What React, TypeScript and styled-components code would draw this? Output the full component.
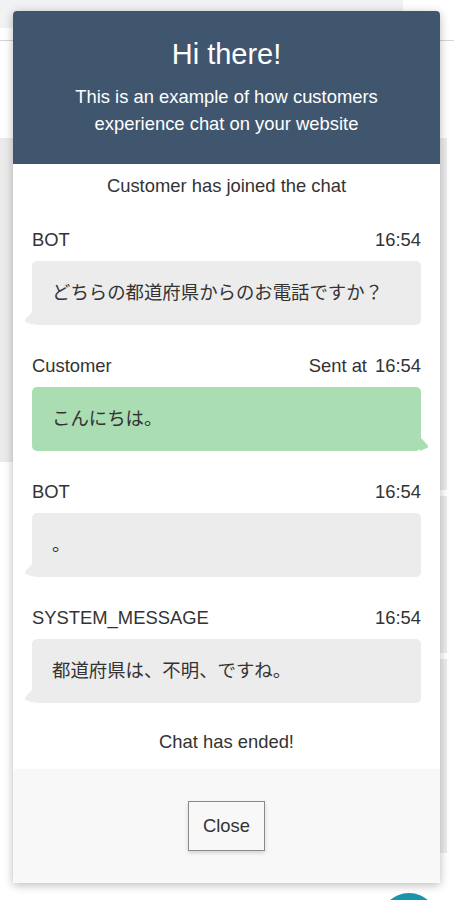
import styled, { createGlobalStyle } from "styled-components";

const GlobalStyle = createGlobalStyle`
  html, body {
    margin: 0;
    padding: 0;
    background: #ffffff;
  }
  body {
    font-family: "Liberation Sans", "Noto Sans CJK JP", Arial, sans-serif;
    color: #333333;
  }
  * {
    box-sizing: border-box;
  }
`;

// page sitting behind the chat widget
const Page = styled.div`
  position: relative;
  width: 454px;
  height: 900px;
  overflow: hidden;
`;

const TopBar = styled.div`
  width: 403px;
  height: 28px;
  background: #f1f2f4;
`;

const Rule = styled.div`
  margin-top: 12px;
  height: 1px;
  background: #d4d4d4;
`;

const Content = styled.div`
  margin-top: 97px;
  display: flex;
  justify-content: space-between;
  padding-right: 7px;
`;

const LeftCard = styled.div`
  width: 220px;
  height: 324px;
  background: #ebebeb;
`;

const RightColumn = styled.div`
  width: 180px;
  display: flex;
  flex-direction: column;
  gap: 33px;
`;

const RightCard = styled.div<{ $h: number }>`
  height: ${(p) => p.$h}px;
  background: #ececec;
  & + & {
    margin-top: -27px;
  }
`;

const Launcher = styled.div`
  position: absolute;
  left: 380px;
  top: 893px;
  width: 58px;
  height: 58px;
  border-radius: 50%;
  background: #1a93ad;
`;

// chat widget
const Widget = styled.div`
  position: absolute;
  top: 11px;
  left: 13px;
  width: 427px;
  height: 872px;
  background: #ffffff;
  border-radius: 4px 4px 0 0;
  box-shadow: 0 2px 10px rgba(0, 0, 0, 0.28);
  display: flex;
  flex-direction: column;
`;

const Header = styled.div`
  background: #40566f;
  border-radius: 4px 4px 0 0;
  padding: 26px 20px 27px;
  text-align: center;
  color: #ffffff;
`;

const Title = styled.h1`
  margin: 0;
  font-size: 29px;
  line-height: 34px;
  font-weight: 400;
`;

const Subtitle = styled.p`
  margin: 12px 0 0;
  font-size: 18.4px;
  line-height: 27px;
`;

const Body = styled.div`
  flex: 1;
  padding: 11px 19px 16px;
  display: flex;
  flex-direction: column;
`;

const Notice = styled.div<{ $top: number }>`
  margin-top: ${(p) => p.$top}px;
  text-align: center;
  font-size: 18.4px;
  line-height: 22px;
`;

const Message = styled.div<{ $top: number }>`
  margin-top: ${(p) => p.$top}px;
`;

const Meta = styled.div`
  display: flex;
  justify-content: space-between;
  font-size: 18.4px;
  line-height: 22px;
  margin-bottom: 10px;
`;

const SentAt = styled.span`
  margin-right: 8px;
`;

const Bubble = styled.div<{ $variant: "bot" | "customer" }>`
  position: relative;
  height: 64px;
  padding: 20px 20px;
  border-radius: 5px;
  font-size: 18.4px;
  line-height: 24px;
  background: ${(p) => (p.$variant === "customer" ? "#aadeb2" : "#ececec")};

  &::after {
    content: "";
    position: absolute;
    bottom: 0;
    width: 8px;
    height: 14px;
    background: inherit;
    ${(p) =>
      p.$variant === "customer"
        ? `right: -7px; clip-path: polygon(0 0, 100% 60%, 100% 75%, 0 100%);`
        : `left: -7px; clip-path: polygon(100% 0, 0 60%, 0 75%, 100% 100%);`}
  }
`;

const Footer = styled.div`
  height: 114px;
  background: #f8f8f8;
  display: flex;
  justify-content: center;
  align-items: center;
`;

const CloseButton = styled.button`
  width: 77px;
  height: 50px;
  background: #f8f8f8;
  border: 1px solid #8a8a8a;
  border-radius: 0;
  box-shadow: 0 2px 4px rgba(0, 0, 0, 0.15);
  font-family: inherit;
  font-size: 18.4px;
  color: #333333;
  cursor: pointer;
`;

type Msg = {
  author: string;
  time: string;
  text: string;
  variant: "bot" | "customer";
};

const messages: Msg[] = [
  { author: "BOT", time: "16:54", text: "どちらの都道府県からのお電話ですか？", variant: "bot" },
  { author: "Customer", time: "16:54", text: "こんにちは。", variant: "customer" },
  { author: "BOT", time: "16:54", text: "。", variant: "bot" },
  { author: "SYSTEM_MESSAGE", time: "16:54", text: "都道府県は、不明、ですね。", variant: "bot" },
];

export default function App() {
  return (
    <>
      <GlobalStyle />
      <Page>
        <TopBar />
        <Rule />
        <Content>
          <LeftCard />
          <RightColumn>
            <RightCard $h={352} />
            <RightCard $h={157} />
            <RightCard $h={194} />
          </RightColumn>
        </Content>
        <Launcher />

        <Widget>
          <Header>
            <Title>Hi there!</Title>
            <Subtitle>
              This is an example of how customers
              <br />
              experience chat on your website
            </Subtitle>
          </Header>
          <Body>
            <Notice $top={0}>Customer has joined the chat</Notice>
            {messages.map((m, idx) => (
              <Message key={idx} $top={idx === 0 ? 32 : 30}>
                <Meta>
                  <span>{m.author}</span>
                  <span>
                    {m.variant === "customer" && <SentAt>Sent at</SentAt>}
                    {m.time}
                  </span>
                </Meta>
                <Bubble $variant={m.variant}>{m.text}</Bubble>
              </Message>
            ))}
            <Notice $top={28}>Chat has ended!</Notice>
          </Body>
          <Footer>
            <CloseButton>Close</CloseButton>
          </Footer>
        </Widget>
      </Page>
    </>
  );
}
